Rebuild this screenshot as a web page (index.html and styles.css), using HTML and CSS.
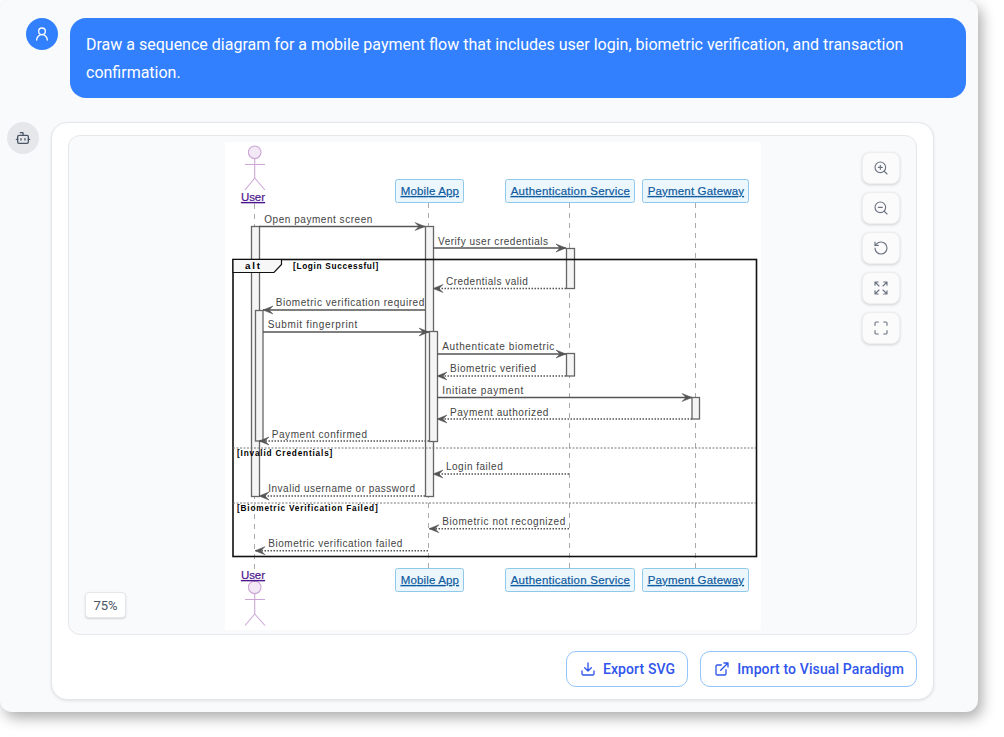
FILE: index.html
```html
<!DOCTYPE html>
<html lang="en">
<head>
<meta charset="utf-8">
<title>Sequence diagram chat</title>
<link rel="stylesheet" href="styles.css">
</head>
<body>
<main class="panel">
  <section class="row row-user">
    <div class="avatar avatar-user">
      <svg class="icon" viewBox="0 0 24 24"><circle cx="12" cy="8" r="5"/><path d="M20 21a8 8 0 0 0-16 0"/></svg>
    </div>
    <p class="bubble">Draw a sequence diagram for a mobile payment flow that includes user login, biometric verification, and transaction confirmation.</p>
  </section>
  <section class="row row-bot">
    <div class="avatar avatar-bot">
      <svg class="icon" viewBox="0 0 24 24"><path d="M12 8V4H8"/><rect x="4" y="8" width="16" height="12" rx="2"/><path d="M2 14h2M20 14h2M15 13v2M9 13v2"/></svg>
    </div>
    <article class="card">
      <div class="stage">
        <svg class="diagram" viewBox="225 142 536 488" width="536" height="488">
          <g class="lifeline">
            <path d="M254.5 204V570"/><path d="M428.5 203V568"/><path d="M569.5 203V568"/><path d="M695.5 203V568"/>
          </g>
          <g class="actor">
            <circle cx="254.7" cy="152.3" r="6.3"/><path d="M245 164.5H265M254.7 158.6V178M245 190L254.7 178L265 190"/>
            <circle cx="254.7" cy="587.3" r="6.3"/><path d="M245 599.5H265M254.7 593.6V614M245 625.5L254.7 614L265 625.5"/>
          </g>
          <text class="actor-name" x="241" y="201" textLength="24">User</text>
          <text class="actor-name" x="241" y="579" textLength="24">User</text>
          <g class="box">
            <rect x="395.5" y="179.5" width="68" height="23" rx="2"/><rect x="505.5" y="179.5" width="129" height="23" rx="2"/><rect x="642.5" y="179.5" width="106" height="23" rx="2"/>
            <rect x="395.5" y="568.5" width="68" height="23" rx="2"/><rect x="505.5" y="568.5" width="129" height="23" rx="2"/><rect x="642.5" y="568.5" width="106" height="23" rx="2"/>
          </g>
          <g class="box-name">
            <text x="400.7" y="195" textLength="58.3">Mobile App</text><text x="510.7" y="195" textLength="119.3">Authentication Service</text><text x="647.7" y="195" textLength="96.3">Payment Gateway</text>
            <text x="400.7" y="584" textLength="58.3">Mobile App</text><text x="510.7" y="584" textLength="119.3">Authentication Service</text><text x="647.7" y="584" textLength="96.3">Payment Gateway</text>
          </g>
          <g class="activation">
            <rect x="251.5" y="226.5" width="8" height="270"/><rect x="255.5" y="310.5" width="7.5" height="130.5"/>
            <rect x="425.5" y="226.5" width="8" height="270"/><rect x="429.5" y="331.5" width="8" height="110"/>
            <rect x="566.5" y="248.5" width="8" height="40"/><rect x="566.5" y="353.5" width="8" height="22.5"/>
            <rect x="692" y="397.5" width="7.5" height="21.5"/>
          </g>
          <g class="solid">
            <path d="M259 226.5H425"/><path d="M433 248H566"/><path d="M425 310H263"/><path d="M263 332H429"/><path d="M437 354H566"/><path d="M437 397.5H692"/>
          </g>
          <g class="dotted">
            <path d="M566 288.5H433"/><path d="M566 376H437"/><path d="M692 419H437"/><path d="M429 441H259"/><path d="M569 474H433"/><path d="M425 496H259"/><path d="M569 528.7H429"/><path d="M428 550.7H255"/>
          </g>
          <g class="head">
            <path d="M415 222.5L425 226.5L415 230.5L419 226.5Z"/><path d="M556 244L566 248L556 252L560 248Z"/>
            <path d="M443 284.5L433 288.5L443 292.5L439 288.5Z"/><path d="M273 306L263 310L273 314L269 310Z"/>
            <path d="M419 328L429 332L419 336L423 332Z"/><path d="M556 350L566 354L556 358L560 354Z"/>
            <path d="M447 372L437 376L447 380L443 376Z"/><path d="M682 393.5L692 397.5L682 401.5L686 397.5Z"/>
            <path d="M447 415L437 419L447 423L443 419Z"/><path d="M269 437L259 441L269 445L265 441Z"/>
            <path d="M443 470L433 474L443 478L439 474Z"/><path d="M269 492L259 496L269 500L265 496Z"/>
            <path d="M439 524.7L429 528.7L439 532.7L435 528.7Z"/><path d="M265 546.7L255 550.7L265 554.7L261 550.7Z"/>
          </g>
          <g class="msg">
            <text x="264.3" y="223" textLength="108">Open payment screen</text>
            <text x="438" y="245" textLength="110">Verify user credentials</text>
            <text x="446" y="285" textLength="81.7">Credentials valid</text>
            <text x="275.7" y="306" textLength="148.6">Biometric verification required</text>
            <text x="267.7" y="328" textLength="89.6">Submit fingerprint</text>
            <text x="442.3" y="350" textLength="112">Authenticate biometric</text>
            <text x="450" y="372" textLength="86">Biometric verified</text>
            <text x="442.3" y="394" textLength="81">Initiate payment</text>
            <text x="450" y="416" textLength="98.3">Payment authorized</text>
            <text x="271.7" y="438" textLength="95.3">Payment confirmed</text>
            <text x="446" y="470" textLength="56.7">Login failed</text>
            <text x="268.3" y="492" textLength="146.7">Invalid username or password</text>
            <text x="442.3" y="525" textLength="123">Biometric not recognized</text>
            <text x="268.3" y="547" textLength="134">Biometric verification failed</text>
          </g>
          <rect class="frame" x="233" y="259.5" width="523.5" height="297"/>
          <path class="tab" d="M233 259.5H281.5V264.5L274 272.5H233Z"/>
          <path class="separator" d="M233 448H756M233 503H756"/>
          <text class="alt" x="245" y="269" textLength="15">alt</text>
          <g class="guard">
            <text x="293" y="269" textLength="85.3">[Login Successful]</text>
            <text x="237" y="456" textLength="95.3">[Invalid Credentials]</text>
            <text x="237" y="511" textLength="140.7">[Biometric Verification Failed]</text>
          </g>
        </svg>
        <div class="tools">
          <button class="tool" type="button"><svg class="icon" viewBox="0 0 24 24"><circle cx="11" cy="11" r="8"/><path d="M21 21l-4.35-4.35M11 8v6M8 11h6"/></svg></button>
          <button class="tool" type="button"><svg class="icon" viewBox="0 0 24 24"><circle cx="11" cy="11" r="8"/><path d="M21 21l-4.35-4.35M8 11h6"/></svg></button>
          <button class="tool" type="button"><svg class="icon" viewBox="0 0 24 24"><path d="M3 12a9 9 0 1 0 9-9 9.75 9.75 0 0 0-6.74 2.74L3 8"/><path d="M3 3v5h5"/></svg></button>
          <button class="tool" type="button"><svg class="icon" viewBox="0 0 24 24"><path d="M21 21l-6-6m6 6v-4.8m0 4.8h-4.8M3 16.2V21m0 0h4.8M3 21l6-6M21 7.8V3m0 0h-4.8M21 3l-6 6M3 7.8V3m0 0h4.8M3 3l6 6"/></svg></button>
          <button class="tool" type="button"><svg class="icon" viewBox="0 0 24 24"><path d="M8 3H5a2 2 0 0 0-2 2v3M21 8V5a2 2 0 0 0-2-2h-3M3 16v3a2 2 0 0 0 2 2h3M16 21h3a2 2 0 0 0 2-2v-3"/></svg></button>
        </div>
        <div class="zoom-level">75%</div>
      </div>
      <div class="actions">
        <button class="action" type="button"><svg class="icon" viewBox="0 0 24 24"><path d="M21 15v4a2 2 0 0 1-2 2H5a2 2 0 0 1-2-2v-4"/><path d="M7 10l5 5 5-5M12 15V3"/></svg>Export SVG</button>
        <button class="action" type="button"><svg class="icon" viewBox="0 0 24 24"><path d="M15 3h6v6M10 14L21 3M18 13v6a2 2 0 0 1-2 2H5a2 2 0 0 1-2-2V8a2 2 0 0 1 2-2h6"/></svg>Import to Visual Paradigm</button>
      </div>
    </article>
  </section>
</main>
</body>
</html>
```
FILE: styles.css
```css
* { box-sizing: border-box; }
html, body { margin: 0; height: 100%; background: #fff; overflow: hidden; }
body { font-family: Roboto, "Liberation Sans", sans-serif; }

.panel {
  width: 978px;
  height: 712px;
  padding: 18px 12px 12px 7px;
  display: flex;
  flex-direction: column;
  gap: 24px;
  background: #f9fafb;
  border-radius: 12px;
  box-shadow: 4px 6px 14px rgba(0, 0, 0, .32);
}

.row { display: flex; gap: 12px; align-items: flex-start; }
.row-user { padding-left: 19px; }
.row-bot { padding-right: 32px; }

.icon {
  width: 16px;
  height: 16px;
  fill: none;
  stroke: currentColor;
  stroke-width: 2;
  stroke-linecap: round;
  stroke-linejoin: round;
  flex: none;
}

.avatar {
  width: 32px;
  height: 32px;
  flex: none;
  border-radius: 50%;
  display: flex;
  align-items: center;
  justify-content: center;
}
.avatar-user { background: #3380ff; color: #fff; }
.avatar-bot { background: #e5e7eb; color: #4b5563; }

.bubble {
  flex: 1;
  margin: 0;
  height: 80px;
  padding: 13px 16px 11px;
  border-radius: 16px;
  background: #3380ff;
  color: #fff;
  font-size: 16px;
  line-height: 28px;
}

.card {
  flex: 1;
  height: 578px;
  padding: 12px 16px;
  display: flex;
  flex-direction: column;
  gap: 16px;
  background: #fff;
  border: 1px solid #e5e7eb;
  border-radius: 16px;
  box-shadow: 0 1px 3px rgba(0, 0, 0, .1);
}

.stage {
  position: relative;
  height: 500px;
  padding: 6px 0 4px 1px;
  display: flex;
  justify-content: center;
  background: #f9fafb;
  border: 1px solid #e5e7eb;
  border-radius: 12px;
}

.diagram { display: block; background: #fff; font-family: "Liberation Sans", Arial, sans-serif; }
.lifeline path { stroke: #aaa; stroke-width: 1; stroke-dasharray: 5 5; fill: none; }
.actor circle, .actor path { stroke: #cda6d6; stroke-width: 1.1; fill: #f3e8f5; }
.actor path { fill: none; }
.actor-name { font-size: 11.5px; fill: #4a148c; stroke: #4a148c; stroke-width: .2; text-decoration: underline; }
.box rect { fill: #ecf6fd; stroke: #90c8ea; stroke-width: 1; }
.box-name text { font-size: 11.5px; fill: #0d5a9e; stroke: #0d5a9e; stroke-width: .2; text-decoration: underline; }
.activation rect { fill: #f5f5f5; stroke: #666; stroke-width: 1.3; }
.solid path { stroke: #555; stroke-width: 1.5; fill: none; }
.dotted path { stroke: #555; stroke-width: 1.4; stroke-dasharray: 1.5 1.5; fill: none; }
.head path { fill: #555; stroke: #555; stroke-width: .5; }
.msg text { font-size: 10px; fill: #444; }
.frame { fill: none; stroke: #111; stroke-width: 1.6; }
.tab { fill: #f7f7f7; stroke: #111; stroke-width: 1.2; }
.separator { fill: none; stroke: #777; stroke-width: 1; stroke-dasharray: 2 1.5; }
.alt { font-size: 9.75px; font-weight: 700; fill: #000; }
.guard text { font-size: 8.25px; font-weight: 700; fill: #000; }

.tools {
  position: absolute;
  top: 16px;
  right: 16px;
  display: flex;
  flex-direction: column;
  gap: 8px;
}
.tool {
  width: 38px;
  height: 32px;
  padding: 0;
  display: flex;
  align-items: center;
  justify-content: center;
  color: #6b7280;
  background: #fbfbfc;
  border: 1px solid #eceef1;
  border-radius: 8px;
  box-shadow: 0 1px 3px rgba(0, 0, 0, .16);
}
.tool .icon { stroke-width: 1.7; }

.zoom-level {
  position: absolute;
  left: 16px;
  bottom: 16px;
  width: 41px;
  height: 26px;
  display: flex;
  align-items: center;
  justify-content: center;
  font-size: 13px;
  color: #4b5563;
  background: #fff;
  border: 1px solid #e5e7eb;
  border-radius: 4px;
  box-shadow: 0 1px 2px rgba(0, 0, 0, .15);
}

.actions { display: flex; justify-content: flex-end; gap: 12px; }
.action {
  height: 36px;
  padding: 0 12px 0 13px;
  display: flex;
  align-items: center;
  gap: 7px;
  font-family: Roboto, "Liberation Sans", sans-serif;
  font-size: 14px;
  font-weight: 500;
  letter-spacing: .12px;
  color: #2f55eb;
  background: #fff;
  border: 1px solid #93c5fd;
  border-radius: 10px;
}
```
